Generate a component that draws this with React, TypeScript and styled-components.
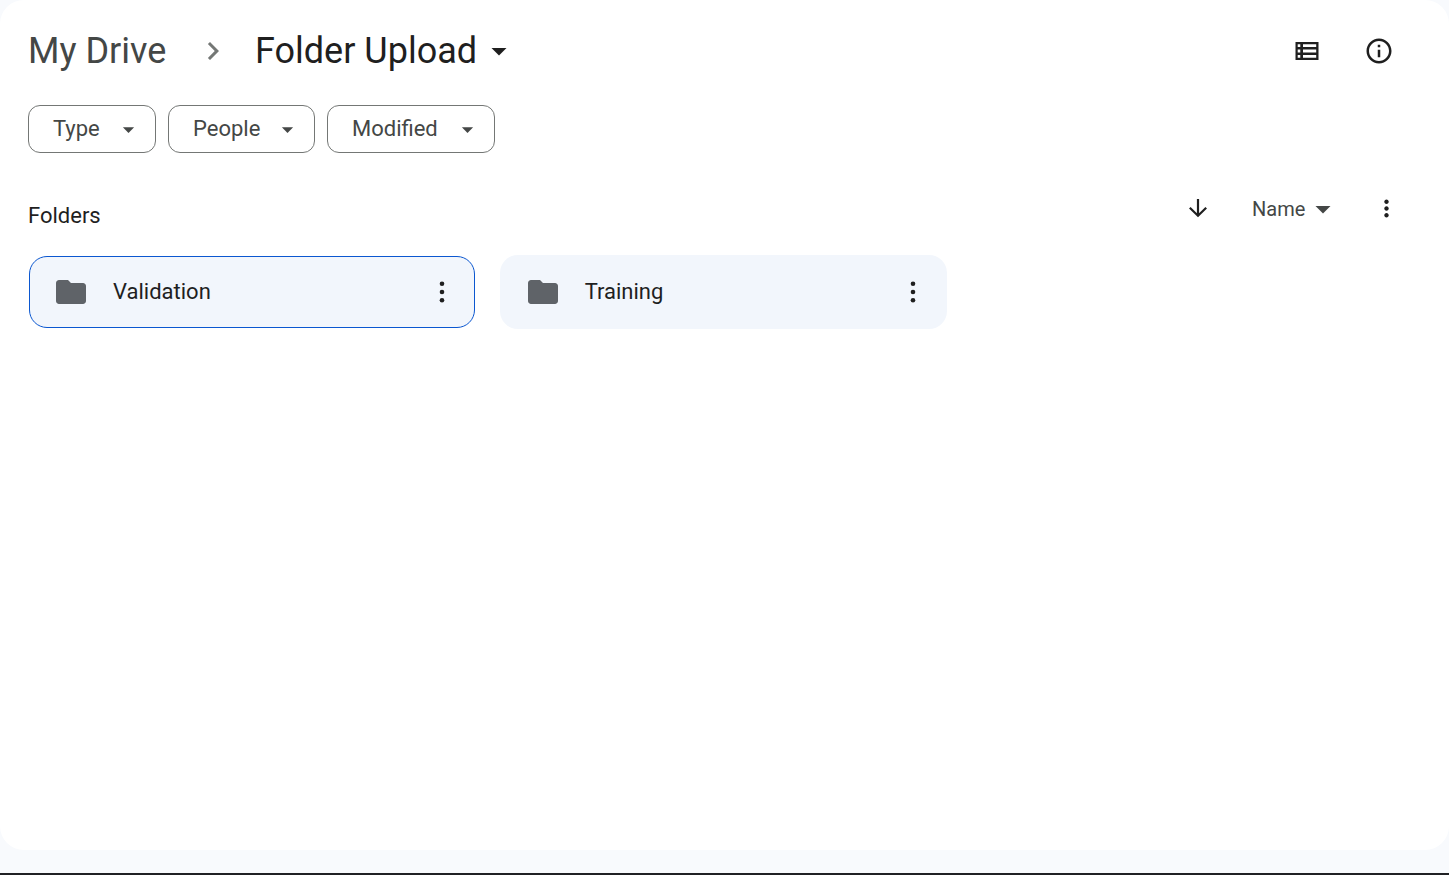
import React from "react";
import styled, { createGlobalStyle } from "styled-components";
import {
  MdArrowDropDown,
  MdChevronRight,
  MdFolder,
  MdMoreVert,
  MdOutlineInfo,
} from "react-icons/md";

const GlobalStyle = createGlobalStyle`
  *, *::before, *::after { box-sizing: border-box; }
  body {
    margin: 0;
    background: #f8fafd;
    color: #1f1f1f;
    font-family: "Google Sans", Roboto, "Liberation Sans", sans-serif;
    font-size: 22px;
    line-height: 28px;
  }
  button { font: inherit; color: inherit; background: none; border: 0; padding: 0; cursor: pointer; }
  svg { display: block; flex: none; }
`;

const Page = styled.div`
  display: flex;
  flex-direction: column;
  min-height: 100vh;
  padding-bottom: 23px;
  border-bottom: 2px solid #202124;
`;

const Panel = styled.main`
  flex: 1;
  padding: 20px 30px 24px 28px;
  background: #fff;
  border-radius: 24px;
`;

const Header = styled.header`
  display: flex;
  align-items: center;
  justify-content: space-between;
  height: 62px;
`;

const Breadcrumbs = styled.nav`
  display: flex;
  align-items: center;
  font-size: 36px;
  line-height: 44px;
`;

const ParentLink = styled.a`
  width: 167px;
  color: #444746;
  text-decoration: none;
  white-space: nowrap;
`;

const Separator = styled.span`
  width: 60px;
  color: #747775;
`;

const CurrentFolder = styled.button`
  display: flex;
  align-items: center;
  gap: 4px;
  white-space: nowrap;
`;

const Actions = styled.div`
  display: flex;
  gap: 36px;
  padding-right: 22px;
`;

const IconButton = styled.button<{ $size: number }>`
  display: grid;
  place-items: center;
  width: ${(p) => p.$size}px;
  height: ${(p) => p.$size}px;
`;

const Filters = styled.div`
  display: flex;
  gap: 12px;
  margin-top: 23px;
`;

const Chip = styled.button<{ $width: number }>`
  && {
    display: flex;
    align-items: center;
    justify-content: space-between;
    width: ${(p) => p.$width}px;
    height: 48px;
    padding: 0 13px 0 24px;
    border: 1px solid #747775;
    border-radius: 12px;
    color: #444746;
  }
`;

const SectionBar = styled.div`
  display: flex;
  align-items: flex-start;
  justify-content: space-between;
  height: 61px;
  margin-top: 41px;
`;

const SectionTitle = styled.h2`
  margin: 8px 0 0;
  font-size: 22px;
  font-weight: 400;
  line-height: 28px;
`;

const Sort = styled.div`
  display: flex;
  align-items: center;
  height: 28px;
  padding-right: 19px;
`;

const SortField = styled.button`
  && {
    display: flex;
    align-items: center;
    justify-content: space-between;
    width: 89px;
    margin: 0 31px 0 40px;
    padding-top: 2px;
    color: #444746;
    font-size: 20px;
  }
`;

const FolderGrid = styled.ul`
  display: grid;
  grid-template-columns: repeat(3, 1fr);
  gap: 24px;
  margin: 0;
  padding: 0;
  list-style: none;
`;

const FolderCard = styled.li<{ $selected?: boolean }>`
  display: flex;
  align-items: center;
  height: ${(p) => (p.$selected ? 72 : 74)}px;
  margin: ${(p) => (p.$selected ? 1 : 0)}px;
  padding: 0 ${(p) => (p.$selected ? 14 : 16)}px 0 ${(p) => (p.$selected ? 23 : 25)}px;
  border: ${(p) => (p.$selected ? "1px solid #0b57d0" : "0")};
  border-radius: 18px;
  background: #f2f6fc;
  color: #1f1f1f;
`;

const FolderName = styled.span`
  flex: 1;
  margin-left: 24px;
`;

const ListLayoutIcon = () => (
  <svg width="24" height="18" viewBox="0 0 24 18" aria-hidden="true">
    <path
      fill="#1f1f1f"
      fillRule="evenodd"
      d="M.5 0h23v18H.5zM2.7 2.2v2.9h2.6V2.2zM8 2.2v2.9h13.2V2.2zM2.7 7.6v2.8h2.6V7.6zM8 7.6v2.8h13.2V7.6zM2.7 12.9v2.9h2.6v-2.9zM8 12.9v2.9h13.2v-2.9z"
    />
  </svg>
);

const DownArrowIcon = () => (
  <svg width="20" height="20" viewBox="0 0 20 20" fill="none" stroke="#1f1f1f" strokeWidth="2.2" aria-hidden="true">
    <path d="M10 1v17M1.8 9.8l8.2 8 8.2-8" />
  </svg>
);

const CardMenuIcon = () => (
  <svg width="6" height="24" viewBox="0 0 6 24" fill="#1f1f1f" aria-hidden="true">
    <circle cx="3" cy="3.7" r="2.3" />
    <circle cx="3" cy="12" r="2.3" />
    <circle cx="3" cy="20.3" r="2.3" />
  </svg>
);

const filters = [
  { label: "Type", width: 128 },
  { label: "People", width: 147 },
  { label: "Modified", width: 168 },
];

const folders = [
  { name: "Validation", selected: true },
  { name: "Training", selected: false },
];

export default function App() {
  return (
    <>
      <GlobalStyle />
      <Page>
        <Panel>
          <Header>
            <Breadcrumbs aria-label="Breadcrumb">
              <ParentLink href="#">My Drive</ParentLink>
              <Separator>
                <MdChevronRight size={36} />
              </Separator>
              <CurrentFolder>
                Folder Upload
                <MdArrowDropDown size={36} />
              </CurrentFolder>
            </Breadcrumbs>
            <Actions>
              <IconButton $size={36} aria-label="List layout">
                <ListLayoutIcon />
              </IconButton>
              <IconButton $size={36} aria-label="View details">
                <MdOutlineInfo size={30} />
              </IconButton>
            </Actions>
          </Header>
          <Filters>
            {filters.map((f) => (
              <Chip key={f.label} $width={f.width}>
                {f.label}
                <MdArrowDropDown size={27} />
              </Chip>
            ))}
          </Filters>
          <SectionBar>
            <SectionTitle>Folders</SectionTitle>
            <Sort>
              <IconButton $size={28} aria-label="Reverse sort direction">
                <DownArrowIcon />
              </IconButton>
              <SortField>
                Name
                <MdArrowDropDown size={36} />
              </SortField>
              <IconButton $size={28} aria-label="More sorting options">
                <MdMoreVert size={27} color="#1f1f1f" />
              </IconButton>
            </Sort>
          </SectionBar>
          <FolderGrid>
            {folders.map((f) => (
              <FolderCard key={f.name} $selected={f.selected}>
                <MdFolder size={36} color="#5f6368" />
                <FolderName>{f.name}</FolderName>
                <IconButton $size={36} aria-label={`More actions for ${f.name}`}>
                  <CardMenuIcon />
                </IconButton>
              </FolderCard>
            ))}
          </FolderGrid>
        </Panel>
      </Page>
    </>
  );
}
